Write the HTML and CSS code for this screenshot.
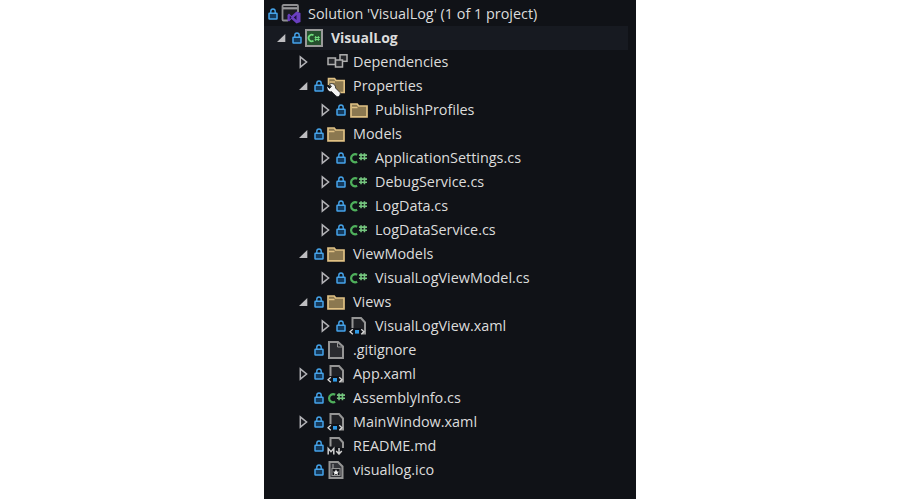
FILE: index.html
```html
<!DOCTYPE html>
<html lang="en">
<head>
<meta charset="utf-8">
<title>Solution Explorer</title>
<link rel="stylesheet" href="styles.css">
</head>
<body>
<svg class="defs" width="0" height="0" aria-hidden="true">
  <symbol id="lock" viewBox="0 0 10 12">
    <path d="M2.800 5V3.200a2.200 2.200 0 0 1 4.400 0V5" fill="none" stroke="#45a3ea" stroke-width="1.400"/>
    <rect x="1" y="5.200" width="8" height="5.800" rx=".5" fill="#14395a" stroke="#45a3ea" stroke-width="1.500"/>
  </symbol>
  <symbol id="open" viewBox="0 0 14 14">
    <path d="M11.300 3v8H3z" fill="#bdbdc0"/>
  </symbol>
  <symbol id="closed" viewBox="0 0 14 14">
    <path d="M4.300 1.800 10.600 7l-6.300 5.200z" fill="#17181d" stroke="#b4b4b8" stroke-width="1.500"/>
  </symbol>
  <symbol id="solution" viewBox="0 0 20 20">
    <path d="M7 16.500H2.500a1 1 0 0 1-1-1V2a1 1 0 0 1 1-1h13.500a1 1 0 0 1 1 1V8" fill="#1b1c21" stroke="#8f8f92" stroke-width="1.800"/>
    <path d="M2 4.300h14.500" stroke="#9a9a9d" stroke-width="2.200"/>
    <path d="M8 9.500 10.500 12l5-4.500 4 1.500v9l-4 1.500-5-4.500L8 17.500l-1.500-1V11z" fill="#6a3fc0"/>
    <path d="M8.800 11.800v3.400l1.700-1.700zM15.500 11l-2.800 2.500 2.800 2.500z" fill="#1d1240"/>
  </symbol>
  <symbol id="csproj" viewBox="0 0 18 18">
    <rect x="1" y="1" width="16" height="16" fill="#25502e" stroke="#9a9a9a" stroke-width="2"/>
    <path d="M8.500 6.300a3.200 3.200 0 1 0 0 5.400" fill="none" stroke="#6fdc7c" stroke-width="1.700"/>
    <path d="M10.700 7v5M13.300 7v5M9.700 8.500h5M9.700 10.500h5" stroke="#6fdc7c" stroke-width="1"/>
  </symbol>
  <symbol id="cs" viewBox="0 0 19 14">
    <path d="M8.600 3.500A4.300 4.300 0 1 0 8.600 11" fill="none" stroke="#4fb05c" stroke-width="2.400"/>
    <path d="M12.700 2v7.500M16.300 2v7.500M10.500 4h8.500M10.500 7.300h8.500" stroke="#74c47e" stroke-width="1.700"/>
  </symbol>
  <symbol id="deps" viewBox="0 0 22 16">
    <g fill="#26272b" stroke="#b0b0b0" stroke-width="1.500">
      <rect x="1" y="4" width="7.500" height="6.500"/>
      <rect x="13" y="0.800" width="7" height="6.500"/>
      <rect x="8.500" y="6" width="7" height="7"/>
    </g>
  </symbol>
  <symbol id="folder" viewBox="0 0 18 16">
    <path d="M1 14.800V2h6.200l1.500 2H17v10.800z" fill="#8b7850" stroke="#e0c184" stroke-width="1.700"/>
    <path d="M2 5.500h5.500" stroke="#e0c184" stroke-width="1.500"/>
  </symbol>
  <symbol id="propfolder" viewBox="0 0 18 22">
    <path d="M1.500 10V3.500h6l1.500 2h8.200v12H12" fill="#8b7850" stroke="#e0c184" stroke-width="1.600"/>
    <path d="M2.500 7h5.500" stroke="#e0c184" stroke-width="1.400"/>
    <path d="M0 11 2.500 13.500 4.500 11.500 2.500 9C5.500 7.500 9 10 8.500 13L13 17.500Q14 19 12.500 20.500L11.500 21.500Q10 22 9 21L4.500 16.500C2 17.500-.5 14.500 0 11z" fill="#f2f2f2" stroke="#101217" stroke-width=".7"/>
  </symbol>
  <symbol id="doc" viewBox="0 0 18 18">
    <path d="M2 17V1h9l5 4.500V17z" fill="#2a2b2f" stroke="#959595" stroke-width="2"/>
    <path d="M10.500 1.500v4.500h5" fill="none" stroke="#959595" stroke-width="1"/>
  </symbol>
  <symbol id="xaml" viewBox="0 0 18 18">
    <path d="M3.500 11V1h8.500l4 4.500V16.500h-3" fill="#202125" stroke="#959595" stroke-width="2"/>
    <rect x="5" y="11" width="8" height="7" fill="#101217"/>
    <path d="M3.800 12.300 1 14.800l2.800 2.500M12.200 12.300l2.800 2.500-2.800 2.500" fill="none" stroke="#d8d8d8" stroke-width="1.300"/>
    <rect x="6" y="13" width="4" height="3.600" fill="#2f9ae6"/>
  </symbol>
  <symbol id="md" viewBox="0 0 18 18">
    <path d="M3.500 9.500V1h8.500l4 4.500V11" fill="#202125" stroke="#959595" stroke-width="2"/>
    <path d="M1.200 17.500v-6l2.800 3.200 2.800-3.200v6" fill="none" stroke="#cfcfcf" stroke-width="1.500"/>
    <path d="M12 11v6M9.200 14l2.800 3 2.800-3" fill="none" stroke="#cfcfcf" stroke-width="1.500"/>
  </symbol>
  <symbol id="ico" viewBox="0 0 18 18">
    <path d="M2.500 17V1h8.500l4.500 4.500V17z" fill="#34353a" stroke="#959595" stroke-width="2"/>
    <rect x="5" y="7.500" width="8" height="7" fill="#15161a" stroke="#959595"/>
    <path d="M9 8.300l1 2.100 2.100.3-1.500 1.400.4 2-2-1.100-2 1.100.4-2-1.500-1.400 2.100-.3z" fill="#f0f0f0"/>
    <path d="M5 4h2M5 6h2" stroke="#b0b0b0"/>
  </symbol>
</svg>

<main class="explorer">
  <ul class="tree">
    <li class="row l0">
      <svg class="lock"><use href="#lock"/></svg>
      <svg class="icon wide"><use href="#solution"/></svg>
      <span class="label">Solution 'VisualLog' (1 of 1 project)</span>
    </li>
    <li class="row l1 active">
      <svg class="exp"><use href="#open"/></svg>
      <svg class="lock"><use href="#lock"/></svg>
      <svg class="icon"><use href="#csproj"/></svg>
      <span class="label strong">VisualLog</span>
    </li>
    <li class="row l2">
      <svg class="exp"><use href="#closed"/></svg>
      <span class="lock"></span>
      <svg class="icon over"><use href="#deps"/></svg>
      <span class="label">Dependencies</span>
    </li>
    <li class="row l2">
      <svg class="exp"><use href="#open"/></svg>
      <svg class="lock"><use href="#lock"/></svg>
      <svg class="icon prop"><use href="#propfolder"/></svg>
      <span class="label">Properties</span>
    </li>
    <li class="row l3">
      <svg class="exp"><use href="#closed"/></svg>
      <svg class="lock"><use href="#lock"/></svg>
      <svg class="icon folder-l3"><use href="#folder"/></svg>
      <span class="label">PublishProfiles</span>
    </li>
    <li class="row l2">
      <svg class="exp"><use href="#open"/></svg>
      <svg class="lock"><use href="#lock"/></svg>
      <svg class="icon"><use href="#folder"/></svg>
      <span class="label">Models</span>
    </li>
    <li class="row l3">
      <svg class="exp"><use href="#closed"/></svg>
      <svg class="lock"><use href="#lock"/></svg>
      <svg class="icon"><use href="#cs"/></svg>
      <span class="label">ApplicationSettings.cs</span>
    </li>
    <li class="row l3">
      <svg class="exp"><use href="#closed"/></svg>
      <svg class="lock"><use href="#lock"/></svg>
      <svg class="icon"><use href="#cs"/></svg>
      <span class="label">DebugService.cs</span>
    </li>
    <li class="row l3">
      <svg class="exp"><use href="#closed"/></svg>
      <svg class="lock"><use href="#lock"/></svg>
      <svg class="icon"><use href="#cs"/></svg>
      <span class="label">LogData.cs</span>
    </li>
    <li class="row l3">
      <svg class="exp"><use href="#closed"/></svg>
      <svg class="lock"><use href="#lock"/></svg>
      <svg class="icon"><use href="#cs"/></svg>
      <span class="label">LogDataService.cs</span>
    </li>
    <li class="row l2">
      <svg class="exp"><use href="#open"/></svg>
      <svg class="lock"><use href="#lock"/></svg>
      <svg class="icon"><use href="#folder"/></svg>
      <span class="label">ViewModels</span>
    </li>
    <li class="row l3">
      <svg class="exp"><use href="#closed"/></svg>
      <svg class="lock"><use href="#lock"/></svg>
      <svg class="icon"><use href="#cs"/></svg>
      <span class="label">VisualLogViewModel.cs</span>
    </li>
    <li class="row l2">
      <svg class="exp"><use href="#open"/></svg>
      <svg class="lock"><use href="#lock"/></svg>
      <svg class="icon"><use href="#folder"/></svg>
      <span class="label">Views</span>
    </li>
    <li class="row l3">
      <svg class="exp"><use href="#closed"/></svg>
      <svg class="lock"><use href="#lock"/></svg>
      <svg class="icon"><use href="#xaml"/></svg>
      <span class="label">VisualLogView.xaml</span>
    </li>
    <li class="row l2">
      <span class="exp"></span>
      <svg class="lock"><use href="#lock"/></svg>
      <svg class="icon"><use href="#doc"/></svg>
      <span class="label">.gitignore</span>
    </li>
    <li class="row l2">
      <svg class="exp"><use href="#closed"/></svg>
      <svg class="lock"><use href="#lock"/></svg>
      <svg class="icon"><use href="#xaml"/></svg>
      <span class="label">App.xaml</span>
    </li>
    <li class="row l2">
      <span class="exp"></span>
      <svg class="lock"><use href="#lock"/></svg>
      <svg class="icon"><use href="#cs"/></svg>
      <span class="label">AssemblyInfo.cs</span>
    </li>
    <li class="row l2">
      <svg class="exp"><use href="#closed"/></svg>
      <svg class="lock"><use href="#lock"/></svg>
      <svg class="icon"><use href="#xaml"/></svg>
      <span class="label">MainWindow.xaml</span>
    </li>
    <li class="row l2">
      <span class="exp"></span>
      <svg class="lock"><use href="#lock"/></svg>
      <svg class="icon"><use href="#md"/></svg>
      <span class="label">README.md</span>
    </li>
    <li class="row l2">
      <span class="exp"></span>
      <svg class="lock"><use href="#lock"/></svg>
      <svg class="icon"><use href="#ico"/></svg>
      <span class="label">visuallog.ico</span>
    </li>
  </ul>
</main>
</body>
</html>
```

FILE: styles.css
```css
html, body {
  margin: 0;
  height: 100%;
  background: #fff;
}

body {
  display: flex;
  justify-content: center;
  overflow: hidden;
}

.defs {
  position: absolute;
}

.explorer {
  width: 372px;
  height: 499px;
  background: #101217;
  padding-top: 2px;
  box-sizing: border-box;
}

.tree {
  list-style: none;
  margin: 0;
  padding: 0;
}

.row {
  display: flex;
  align-items: center;
  height: 24px;
  color: #dcdcdc;
  font: 14.4px/24px "Open Sans", "Noto Sans", sans-serif;
}

.l0 { padding-left: 0; }
.l1 { padding-left: 10px; }
.l2 { padding-left: 32px; }
.l3 { padding-left: 54px; }

.active {
  background: #171a21;
  margin-right: 8px;
}

.exp {
  width: 14px;
  height: 14px;
  flex: none;
}

.lock {
  width: 10px;
  height: 12px;
  margin-left: 4px;
  flex: none;
}

.icon {
  width: 18px;
  height: 18px;
  margin-left: 3px;
  flex: none;
}

.wide {
  width: 20px;
  height: 20px;
}

.over {
  width: 22px;
  height: 16px;
}

.prop {
  height: 22px;
}

.folder-l3 {
  margin-left: 4px;
  margin-right: -1px;
}

.label {
  margin-left: 8px;
  white-space: nowrap;
}

.wide + .label {
  margin-left: 7px;
}

.over + .label {
  margin-left: 4px;
}

.strong {
  font-size: 14px;
  font-weight: 700;
}
```
